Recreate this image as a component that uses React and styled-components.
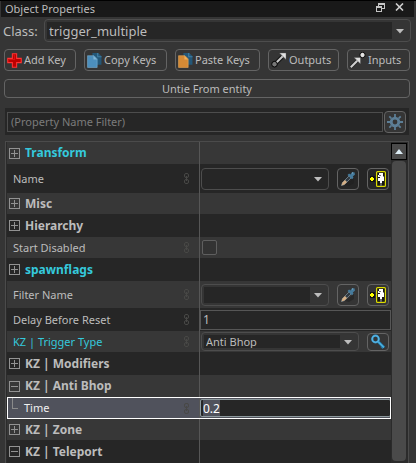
import React from "react";
import styled, { createGlobalStyle, css } from "styled-components";

const GlobalStyle = createGlobalStyle`
  * { box-sizing: border-box; }
  body {
    margin: 0;
    background: #353535;
    overflow: hidden;
  }
  body, button, input, select {
    font-family: "Noto Sans", "Open Sans", sans-serif;
    font-size: 11px;
    line-height: 16px;
    color: #bcbcbc;
  }
`;

const Page = styled.main`
  min-height: 100vh;
  background: #353535;
  border-top: 1px solid #000;
`;

const TitleBar = styled.header`
  display: flex;
  align-items: center;
  height: 16px;
  margin: 0 2px 0 1px;
  padding: 0 10px 0 4px;
  background: #191919;
`;

const Title = styled.h1`
  flex: 1;
  margin: 0;
  font-size: 11px;
  line-height: 16px;
  font-weight: 400;
`;

const WindowButton = styled.button`
  display: flex;
  padding: 0;
  margin-left: 10px;
  margin-bottom: 4px;
  border: 0;
  background: none;
`;

const ClassRow = styled.div`
  display: flex;
  align-items: center;
  gap: 7px;
  padding: 2px 5px 0 3px;
`;

const ClassLabel = styled.label`
  width: 34px;
  font-size: 13px;
  line-height: 20px;
  white-space: nowrap;
`;

const ComboFrame = styled.span`
  position: relative;
  display: flex;
  flex: 1;
  min-width: 0;
  height: ${(p) => p.$height}px;
  padding: 2px 18px 2px 2px;
  border: 1px solid #4d4d4d;
  border-radius: 4px;
  background: ${(p) => (p.$plain ? "#262626" : "#353535")};
`;

const ComboSelect = styled.select`
  flex: 1;
  min-width: 0;
  padding: 0 2px;
  border: 0;
  outline: 0;
  appearance: none;
  background: #262626;
  font-size: ${(p) => (p.$large ? 13 : 11)}px;
  line-height: ${(p) => (p.$large ? 16 : 13)}px;
`;

const ComboArrow = styled.svg`
  position: absolute;
  right: 6px;
  top: 50%;
  margin-top: -2px;
  pointer-events: none;
`;

const Toolbar = styled.div`
  display: grid;
  grid-template-columns: 72fr 83fr 85fr 71fr 63fr;
  gap: 8px;
  padding: 7px 6px 0 4px;
`;

const ToolButton = styled.button`
  display: flex;
  align-items: center;
  gap: 2px;
  min-width: 0;
  height: 22px;
  padding: 0 2px;
  border: 1px solid #646464;
  border-radius: 4px;
  background: #353535;
  white-space: nowrap;
`;

const UntieRow = styled.div`
  display: flex;
  padding: 8px 6px 0 4px;
`;

const UntieButton = styled.button`
  flex: 1;
  height: 19px;
  padding: 0;
  border: 1px solid #646464;
  border-radius: 4px;
  background: #353535;
`;

const FilterBar = styled.div`
  display: flex;
  align-items: center;
  gap: 1px;
  height: 27px;
  margin: 10px 7px 6px 5px;
  padding: 0 3px 0 2px;
  background: #262626;
`;

const FilterInput = styled.input`
  flex: 1;
  min-width: 0;
  height: 20px;
  padding: 0 3px;
  border: 1px solid #4d4d4d;
  outline: 0;
  background: #262626;
  &::placeholder { color: #7b7b7b; opacity: 1; }
`;

const IconButton = styled.button`
  display: flex;
  align-items: center;
  justify-content: center;
  flex: none;
  width: 22px;
  height: ${(p) => (p.$short ? 18 : 22)}px;
  padding: 0;
  border: 1px solid #646464;
  border-radius: 4px;
  background: ${(p) => (p.$dark ? "#262626" : "#353535")};
`;

const Panel = styled.div`
  display: flex;
  margin: 0 7px 0 5px;
  border: 1px solid #4b4b4b;
  border-bottom: 0;
  background: #2b2b2b;
`;

const Rows = styled.div`
  flex: 1;
  min-width: 0;
  margin-left: 1px;
`;

const Row = styled.div`
  position: relative;
  display: flex;
  height: ${(p) => p.$height}px;
  background: ${(p) => (p.$dark ? "#262626" : "#373737")};
  ${(p) =>
    p.$selected &&
    css`
      background: #50525c;
      &::after {
        content: "";
        position: absolute;
        inset: 0;
        border: 1px solid #fff;
        pointer-events: none;
      }
    `}
`;

const NameCell = styled.div`
  display: flex;
  align-items: center;
  flex: none;
  width: 193px;
  padding: 0 9px 0 ${(p) => (p.$group ? 2 : p.$child ? 5 : 6)}px;
  border-right: 1px solid #565656;
`;

const GroupButton = styled.button`
  display: flex;
  align-items: center;
  gap: 5px;
  padding: 0;
  border: 0;
  background: none;
  font-size: 12px;
  font-weight: 700;
  color: ${(p) => (p.$cyan ? "#35c9dc" : "#bcbcbc")};
`;

const PropertyLabel = styled.label`
  flex: 1;
  white-space: nowrap;
  color: ${(p) => (p.$cyan ? "#35c9dc" : p.$bright ? "#f0f0f0" : "#bcbcbc")};
`;

const Branch = styled.span`
  align-self: flex-start;
  width: 6px;
  height: 12px;
  margin-right: 6px;
  border-left: 1px solid #8a8a8a;
  border-bottom: 1px solid #8a8a8a;
`;

const ValueCell = styled.div`
  display: flex;
  align-items: center;
  flex: 1;
  min-width: 0;
  gap: 8px;
  padding: 0 2px 0 1px;
`;

const WideValueCell = styled(ValueCell)`
  padding: 0;
`;

const ValueInput = styled.input`
  flex: 1;
  min-width: 0;
  height: ${(p) => (p.$active ? 18 : 20)}px;
  padding: 0 2px;
  border: 1px solid ${(p) => (p.$active ? "#8d999d" : "#565656")};
  border-radius: ${(p) => (p.$active ? 2 : 0)}px;
  outline: 0;
  background: #262626;
  color: ${(p) => (p.$active ? "#fff" : "#bcbcbc")};
  font-size: 12px;
  &::selection { background: #50525c; color: #fff; }
`;

const CheckBox = styled.input`
  appearance: none;
  width: 15px;
  height: 15px;
  margin: 0 0 0 1px;
  border: 1px solid #5f5f5f;
  border-radius: 2px;
  background: #333;
`;

const ScrollBar = styled.div`
  display: flex;
  flex-direction: column;
  width: 17px;
  padding: 1px 1px 2px 0;
`;

const ScrollUp = styled.button`
  display: flex;
  align-items: center;
  justify-content: center;
  height: 17px;
  padding: 0;
  border: 1px solid #000;
  background: #4a4a4a;
`;

const ScrollThumb = styled.div`
  flex: 1;
  margin: 1px 1px 0;
  border-radius: 4px;
  background: #4a4a4a;
`;

const RestoreIcon = () => (
  <svg width="9" height="9" viewBox="0 0 9 9" fill="none" stroke="#c4c4c4" shapeRendering="crispEdges">
    <path d="M2.5 3V.5h6v5H6M2 1.5h7M.5 3.5h5v5h-5zM0 4.5h6" />
  </svg>
);

const CloseIcon = () => (
  <svg width="9" height="8" viewBox="0 0 9 8" fill="none" stroke="#d0d0d0" strokeWidth="1.6">
    <path d="M1 .5l7 7M8 .5l-7 7" />
  </svg>
);

const PlusIcon = () => (
  <svg width="15" height="15" viewBox="0 0 14 14">
    <path d="M5 .7h4v4.300h4.300v4H9v4.300H5V9H.7V5H5z" fill="#bd0000" stroke="#ff3333" />
    <path d="M6 2h1v4H2" fill="none" stroke="#d91010" />
  </svg>
);

const PagesIcon = ({ front, edge }) => (
  <svg width="15" height="15" viewBox="0 0 14 14">
    <path d="M5 0h5.500L13.500 3v8H5z" fill="#235778" />
    <path d="M10 0v3.500h3.500" fill="none" stroke="#4380a4" />
    <path d="M.5 2.500h6L9.500 5.500v8h-9z" fill={front} stroke={edge} strokeWidth=".5" />
    <path d="M6 2.500V6h3.500z" fill={edge} />
  </svg>
);

const OutputIcon = () => (
  <svg width="16" height="16" viewBox="0 0 16 16">
    <path d="M4 12l7-7" stroke="#111" strokeWidth="4" />
    <path d="M4 12l8-8" stroke="#c9c9c9" strokeWidth="2" />
    <path d="M8.500 1H15v6.500z" fill="#e2e2e2" stroke="#555" strokeWidth=".4" />
    <circle cx="3.500" cy="12.200" r="2.800" fill="#777" stroke="#000" />
  </svg>
);

const InputIcon = () => (
  <svg width="16" height="16" viewBox="0 0 16 16">
    <path d="M1 15l7-7" stroke="#222" strokeWidth="3.500" />
    <path d="M.8 15.200L8 8" stroke="#d0d0d0" strokeWidth="2" />
    <path d="M4 5.500h6.500V12z" fill="#dedede" stroke="#444" strokeWidth=".4" />
    <circle cx="12.500" cy="3" r="2.700" fill="#e3e3e3" stroke="#000" />
  </svg>
);

const GearIcon = () => (
  <svg width="16" height="16" viewBox="0 0 16 16" fill="none" stroke="#5c7e96">
    <circle cx="8" cy="8" r="3.800" strokeWidth="2.800" />
    <path d="M8 0v3M8 13v3M0 8h3M13 8h3M2.300 2.300l2 2M11.700 11.700l2 2M2.300 13.700l2-2M11.700 4.300l2-2" strokeWidth="1.800" />
  </svg>
);

const DropperIcon = () => (
  <svg width="16" height="16" viewBox="0 0 16 16">
    <path d="M5 14l9-7v5l-5 3z" fill="#1e1e1e" opacity=".5" />
    <path d="M1.500 14.500l1-3L9 5l2 2-6.500 6.500z" fill="#303a42" stroke="#8497a3" strokeWidth=".7" />
    <path d="M1.500 14.500l1-3L5 9l2 2-2.500 2.500z" fill="#d6b086" />
    <path d="M7.500 4l1.600-1.400 1.300.8L12 1.200h2.400L15 3.500l-2.200 2 .7 1.300L12 8.300z" fill="#467b9c" />
    <path d="M12 2.300l1-.6" stroke="#8bb4ca" />
  </svg>
);

const EntityIcon = () => (
  <svg width="18" height="18" viewBox="0 0 18 18">
    <path d="M1 6h5v6H1z" fill="#111" />
    <path d="M1 8h1V7h2v1h1v2H4v1H2v-1H1z" fill="#ffff00" />
    <rect x="7.600" y="1.600" width="8.800" height="14.800" rx="1" fill="#151515" stroke="#dddc00" strokeWidth="1.200" />
    <path d="M10 3h4v3l1 1v4h-2v2h-2v-2H9V8h2V7H9V5h1z" fill="#fff" />
    <path d="M12 13v3" stroke="#666" strokeWidth="2" />
    <path d="M10 5.500h2" stroke="#777" />
  </svg>
);

const KeyIcon = () => (
  <svg width="16" height="16" viewBox="0 0 16 16" fill="none">
    <path d="M8 7.500l6 6M11.500 14l1.200-1.200" stroke="#2375a5" strokeWidth="3" />
    <path d="M7.500 7l6.500 6.500" stroke="#4eb3df" strokeWidth="1.500" />
    <circle cx="5.500" cy="5" r="3.300" stroke="#3698cf" strokeWidth="2.200" />
    <circle cx="5.500" cy="5" r="3.400" stroke="#70c6eb" strokeWidth=".7" />
  </svg>
);

const ChainIcon = () => (
  <svg width="7" height="11" viewBox="0 0 7 11" fill="none" stroke="#484846">
    <rect x="1.500" y=".5" width="4" height="4" rx="1.500" />
    <rect x="1.500" y="6.500" width="4" height="4" rx="1.500" />
    <path d="M3.500 3v5" />
  </svg>
);

const ExpandIcon = ({ open }) => (
  <svg width="11" height="11" viewBox="0 0 11 11" fill="none" stroke="#929292" shapeRendering="crispEdges">
    <rect x=".5" y=".5" width="10" height="10" rx="1" />
    <path d={open ? "M2 5.500h7" : "M2 5.500h7M5.500 2v7"} />
  </svg>
);

const Combo = ({ id, value, height, plain, large, label }) => (
  <ComboFrame $height={height} $plain={plain}>
    <ComboSelect id={id} aria-label={label} $large={large}>
      <option>{value}</option>
    </ComboSelect>
    <ComboArrow width="8" height="5" viewBox="0 0 8 5">
      <path d="M0 0h8L4 4.500z" fill="#bdbdbd" />
    </ComboArrow>
  </ComboFrame>
);

const Group = ({ height, dark, cyan, open, children }) => (
  <Row $height={height} $dark={dark}>
    <NameCell $group>
      <GroupButton $cyan={cyan} aria-expanded={!!open}>
        <ExpandIcon open={open} />
        {children}
      </GroupButton>
    </NameCell>
  </Row>
);

const Property = ({ id, label, height, dark, cyan, selected, wide, children }) => {
  const Cell = wide ? WideValueCell : ValueCell;
  return (
    <Row $height={height} $dark={dark} $selected={selected}>
      <NameCell $child={selected}>
        {selected && <Branch />}
        <PropertyLabel htmlFor={id} $cyan={cyan} $bright={selected}>{label}</PropertyLabel>
        <ChainIcon />
      </NameCell>
      <Cell>{children}</Cell>
    </Row>
  );
};

const EntityButtons = ({ dark }) => (
  <>
    <IconButton $dark={dark} aria-label="Pick entity"><DropperIcon /></IconButton>
    <IconButton $dark={dark} aria-label="Go to entity"><EntityIcon /></IconButton>
  </>
);

export default function App() {
  return (
    <Page>
      <GlobalStyle />
      <TitleBar>
        <Title>Object Properties</Title>
        <WindowButton aria-label="Restore"><RestoreIcon /></WindowButton>
        <WindowButton aria-label="Close"><CloseIcon /></WindowButton>
      </TitleBar>
      <ClassRow>
        <ClassLabel htmlFor="class">Class:</ClassLabel>
        <Combo id="class" value="trigger_multiple" height={23} large />
      </ClassRow>
      <Toolbar>
        <ToolButton><PlusIcon />Add Key</ToolButton>
        <ToolButton><PagesIcon front="#4c8fbd" edge="#82b6d5" />Copy Keys</ToolButton>
        <ToolButton><PagesIcon front="#d58a35" edge="#f0b05c" />Paste Keys</ToolButton>
        <ToolButton><OutputIcon />Outputs</ToolButton>
        <ToolButton><InputIcon />Inputs</ToolButton>
      </Toolbar>
      <UntieRow>
        <UntieButton>Untie From entity</UntieButton>
      </UntieRow>
      <FilterBar>
        <FilterInput aria-label="Property name filter" placeholder="(Property Name Filter)" />
        <IconButton aria-label="Filter settings"><GearIcon /></IconButton>
      </FilterBar>
      <Panel>
        <Rows>
          <Group height={22} cyan>Transform</Group>
          <Property id="name" label="Name" height={29} dark>
            <Combo id="name" value="" height={22} plain />
            <EntityButtons dark />
          </Property>
          <Group height={21}>Misc</Group>
          <Group height={23} dark>Hierarchy</Group>
          <Property id="disabled" label="Start Disabled" height={21}>
            <CheckBox id="disabled" type="checkbox" />
          </Property>
          <Group height={23} dark cyan>spawnflags</Group>
          <Property id="filter" label="Filter Name" height={27}>
            <Combo id="filter" value="" height={22} />
            <EntityButtons />
          </Property>
          <Property id="delay" label="Delay Before Reset" height={23} dark wide>
            <ValueInput id="delay" defaultValue="1" />
          </Property>
          <Property id="type" label="KZ | Trigger Type" height={21} cyan>
            <Combo id="type" value="Anti Bhop" height={19} />
            <IconButton $short aria-label="Edit trigger type"><KeyIcon /></IconButton>
          </Property>
          <Group height={23} dark>KZ | Modifiers</Group>
          <Group height={22} open>KZ | Anti Bhop</Group>
          <Property id="time" label="Time" height={22} selected wide>
            <ValueInput
              id="time"
              defaultValue="0.2"
              $active
              autoFocus
              onFocus={(e) => e.target.select()}
            />
          </Property>
          <Group height={21}>KZ | Zone</Group>
          <Group height={23} dark open>KZ | Teleport</Group>
        </Rows>
        <ScrollBar>
          <ScrollUp aria-label="Scroll up">
            <svg width="8" height="5" viewBox="0 0 8 5"><path d="M4 0l4 5H0z" fill="#dcecf5" /></svg>
          </ScrollUp>
          <ScrollThumb />
        </ScrollBar>
      </Panel>
    </Page>
  );
}
